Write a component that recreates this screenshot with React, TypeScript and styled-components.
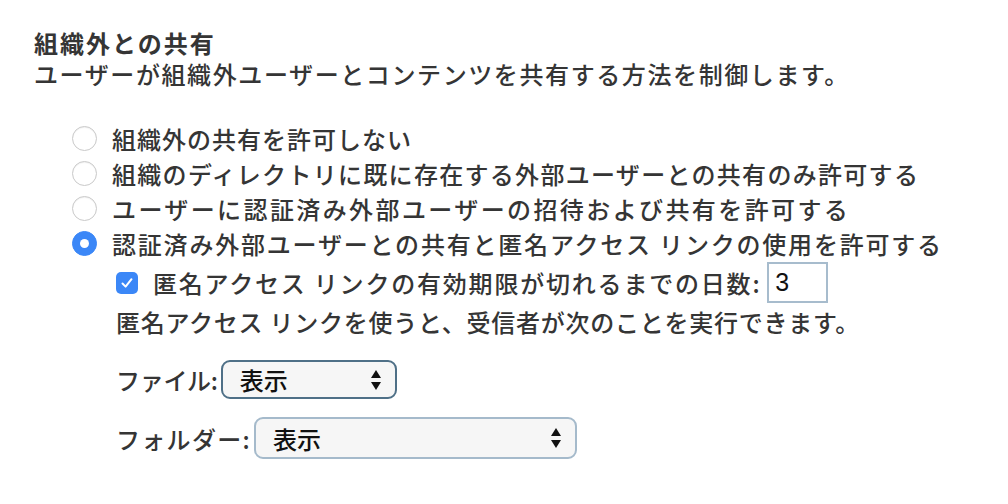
import React, { useState } from 'react';
import styled, { createGlobalStyle } from 'styled-components';

const GlobalStyle = createGlobalStyle`
  html, body {
    margin: 0;
    padding: 0;
    background: #ffffff;
  }
  body {
    font-family: "Noto Sans CJK JP", "Noto Sans", sans-serif;
    color: #353535;
  }
`;

const Page = styled.div`
  width: 1008px;
  height: 504px;
  box-sizing: border-box;
  padding: 26px 0 0 34px;
  font-size: 24px;
  font-weight: 500;
`;

const Title = styled.h2`
  margin: 0;
  font-size: 24px;
  font-weight: 700;
  line-height: 34px;
  letter-spacing: 2px;
`;

const Description = styled.p`
  margin: 0;
  line-height: 28px;
  letter-spacing: 1.6px;
`;

const Options = styled.div`
  display: flex;
  flex-direction: column;
  margin: 33px 0 0 38px;
`;

const OptionRow = styled.label<{ spacing: number }>`
  display: flex;
  align-items: center;
  gap: 15px;
  height: 35px;
  white-space: nowrap;
  letter-spacing: ${({ spacing }) => spacing}px;
`;

const Radio = styled.span<{ checked?: boolean }>`
  flex: none;
  box-sizing: border-box;
  width: 25px;
  height: 25px;
  border-radius: 50%;
  display: flex;
  align-items: center;
  justify-content: center;
  background: ${({ checked }) => (checked ? '#3b87f7' : '#ffffff')};
  border: 1px solid ${({ checked }) => (checked ? '#3b87f7' : '#c9c9c9')};
  box-shadow: ${({ checked }) =>
    checked ? 'none' : 'inset 0 1px 1px rgba(0, 0, 0, 0.06)'};

  &::after {
    content: '';
    display: ${({ checked }) => (checked ? 'block' : 'none')};
    width: 9px;
    height: 9px;
    border-radius: 50%;
    background: #ffffff;
  }
`;

const SubBlock = styled.div`
  display: flex;
  flex-direction: column;
  margin-left: 44px;
`;

const CheckRow = styled.label`
  display: flex;
  align-items: center;
  height: 42px;
  white-space: nowrap;
  letter-spacing: 1.8px;
`;

const Checkbox = styled.span`
  flex: none;
  width: 22px;
  height: 22px;
  border-radius: 5px;
  background: #3b87f7;
  display: flex;
  align-items: center;
  justify-content: center;
  margin: 2px 15px 0 0;
`;

const DaysInput = styled.input`
  box-sizing: border-box;
  width: 61px;
  height: 41px;
  margin-left: 6px;
  padding: 0 6px;
  border: 2px solid #a7bccd;
  font-family: "Liberation Sans", Arial, sans-serif;
  font-size: 25px;
  color: #111;
  outline: none;
`;

const Note = styled.p`
  margin: 0;
  line-height: 37px;
  white-space: nowrap;
  letter-spacing: 0.75px;
`;

const FieldRow = styled.div<{ top: number }>`
  display: flex;
  align-items: center;
  gap: 3px;
  margin-top: ${({ top }) => top}px;
`;

const FieldLabel = styled.span<{ spacing: number }>`
  white-space: nowrap;
  letter-spacing: ${({ spacing }) => spacing}px;
`;

const SelectBox = styled.div<{ width: number; focused?: boolean }>`
  position: relative;
  box-sizing: border-box;
  width: ${({ width }) => width}px;
  height: ${({ focused }) => (focused ? 39 : 42)}px;
  border-radius: 9px;
  border: 2px solid ${({ focused }) => (focused ? '#4f7087' : '#a5bacb')};
  background: #f6f6f6;
  display: flex;
  align-items: center;
  padding-left: 17px;
  font-size: 24px;
  color: #111;
`;

const Arrows = styled.svg`
  position: absolute;
  right: 13px;
  top: 50%;
  transform: translateY(-50%);
`;

const Select = ({ width, focused }: { width: number; focused?: boolean }) => (
  <SelectBox width={width} focused={focused}>
    表示
    <Arrows width="12" height="22" viewBox="0 0 12 22">
      <path d="M6 1 L11 9 L1 9 Z" fill="#111" />
      <path d="M1 13 L11 13 L6 21 Z" fill="#111" />
    </Arrows>
  </SelectBox>
);

const options = [
  { text: '組織外の共有を許可しない', spacing: 1 },
  { text: '組織のディレクトリに既に存在する外部ユーザーとの共有のみ許可する', spacing: 1.3 },
  { text: 'ユーザーに認証済み外部ユーザーの招待および共有を許可する', spacing: 2.4 },
  { text: '認証済み外部ユーザーとの共有と匿名アクセス リンクの使用を許可する', spacing: 1.8 },
];

export default function App() {
  const [selected, setSelected] = useState(3);
  return (
    <>
      <GlobalStyle />
      <Page>
        <Title>組織外との共有</Title>
        <Description>ユーザーが組織外ユーザーとコンテンツを共有する方法を制御します。</Description>
        <Options>
          {options.map((opt, i) => (
            <OptionRow key={opt.text} spacing={opt.spacing} onClick={() => setSelected(i)}>
              <Radio checked={selected === i} />
              {opt.text}
            </OptionRow>
          ))}
          <SubBlock>
            <CheckRow>
              <Checkbox>
                <svg width="14" height="14" viewBox="0 0 14 14">
                  <path
                    d="M2.5 7.5 L5.6 10.6 L11.5 3.2"
                    fill="none"
                    stroke="#fff"
                    strokeWidth="2"
                    strokeLinecap="round"
                    strokeLinejoin="round"
                  />
                </svg>
              </Checkbox>
              匿名アクセス リンクの有効期限が切れるまでの日数:
              <DaysInput defaultValue="3" />
            </CheckRow>
            <Note>匿名アクセス リンクを使うと、受信者が次のことを実行できます。</Note>
            <FieldRow top={20}>
              <FieldLabel spacing={-0.3}>ファイル:</FieldLabel>
              <Select width={176} focused />
            </FieldRow>
            <FieldRow top={18}>
              <FieldLabel spacing={1.3}>フォルダー:</FieldLabel>
              <Select width={323} />
            </FieldRow>
          </SubBlock>
        </Options>
      </Page>
    </>
  );
}
